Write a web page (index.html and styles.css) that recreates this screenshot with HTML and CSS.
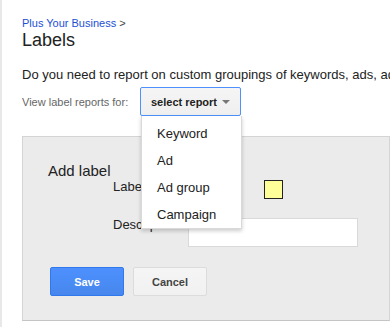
FILE: index.html
```html
<!DOCTYPE html>
<html lang="en">
<head>
    <meta charset="UTF-8">
    <title>Labels</title>
    <link rel="stylesheet" href="styles.css">
</head>
<body>
<div class="page">
    <div class="crumb"><a href="#">Plus Your Business</a> &gt;</div>
    <h1 class="title">Labels</h1>
    <p class="intro">Do you need to report on custom groupings of keywords, ads, ad groups or campaigns?</p>
    <div class="reportRow">
        <span class="reportLabel">View label reports for:</span>
        <div class="selectWrap">
            <div class="selectBtn">select report <span class="arrow"></span></div>
            <ul class="menu">
                <li>Keyword</li>
                <li>Ad</li>
                <li>Ad group</li>
                <li>Campaign</li>
            </ul>
        </div>
    </div>
    <div class="panel">
        <h2 class="panelTitle">Add label</h2>
        <div class="formRow rowLabel">
            <span class="fieldName">Label</span>
            <span class="swatch"></span>
        </div>
        <div class="formRow rowDesc">
            <span class="fieldName">Description</span>
            <span class="textInput"></span>
        </div>
        <div class="buttons">
            <span class="btn save">Save</span>
            <span class="btn cancel">Cancel</span>
        </div>
    </div>
</div>
</body>
</html>
```

FILE: styles.css
```css
*{
    margin:0;
    padding:0;
    list-style: none;
    box-sizing: border-box;
}
html,body{
    height: 100%;
    overflow: hidden;
}
body{
    font-family: "Liberation Sans", Arial, sans-serif;
    color: #222;
    background: #fff;
}
.page{
    height: 100%;
    border-left: 2px solid #e8e8e8;
    padding: 17px 0 0 20px;
}
.crumb{
    font-size: 11px;
    line-height: 13px;
    color: #444;
}
.crumb a{
    color: #1a4fd6;
    text-decoration: none;
}
.title{
    font-size: 18px;
    font-weight: normal;
    line-height: 20px;
    color: #222;
}
.intro{
    font-size: 13px;
    line-height: 16px;
    margin-top: 17px;
    white-space: nowrap;
    overflow: hidden;
}
.reportRow{
    display: flex;
    align-items: center;
    margin-top: 4px;
}
.reportLabel{
    font-size: 11px;
    color: #666;
    width: 118px;
}
.selectWrap{
    position: relative;
}
.selectBtn{
    width: 101px;
    height: 29px;
    border: 1px solid #4d90fe;
    border-radius: 2px;
    background: linear-gradient(#f5f5f5, #efefef);
    font-size: 11px;
    font-weight: bold;
    color: #222;
    display: flex;
    align-items: center;
    justify-content: center;
    gap: 5px;
}
.arrow{
    width: 0;
    height: 0;
    border-left: 4px solid transparent;
    border-right: 4px solid transparent;
    border-top: 4px solid #777;
}
.menu{
    position: absolute;
    left: 1px;
    top: 29px;
    width: 101px;
    padding: 4px 0 0;
    background: #fff;
    border: 1px solid rgba(0,0,0,.15);
    border-top: 0;
    box-shadow: 0 2px 4px rgba(0,0,0,.2);
    z-index: 10;
}
.menu li{
    height: 27px;
    line-height: 27px;
    padding-left: 15px;
    font-size: 13px;
    color: #222;
}
.panel{
    margin-top: 20px;
    height: 185px;
    background: #ebebeb;
    border: 1px solid #d4d4d4;
    border-bottom-color: #c4c4c4;
    padding: 25px 0 0 25px;
}
.panelTitle{
    font-size: 15px;
    font-weight: normal;
    line-height: 18px;
    color: #222;
}
.formRow{
    display: flex;
    align-items: flex-start;
    font-size: 13px;
}
.fieldName{
    width: 75px;
    margin-left: 65px;
    line-height: 15px;
    white-space: nowrap;
    overflow: hidden;
}
.rowLabel{
    height: 20px;
}
.rowLabel .fieldName{
    margin-top: -1px;
}
.swatch{
    width: 19px;
    height: 19px;
    margin-left: 76px;
    background: #ffff99;
    border: 1px solid #222;
}
.rowDesc{
    margin-top: 18px;
}
.rowDesc .fieldName{
    margin-top: -1px;
}
.textInput{
    width: 170px;
    height: 29px;
    background: #fff;
    border: 1px solid #d9d9d9;
}
.buttons{
    display: flex;
    gap: 9px;
    margin-top: 20px;
    margin-left: 2px;
}
.btn{
    width: 74px;
    height: 29px;
    border-radius: 2px;
    font-size: 11px;
    font-weight: bold;
    display: flex;
    align-items: center;
    justify-content: center;
}
.save{
    background: linear-gradient(#4d90fe, #4787ed);
    border: 1px solid #3079ed;
    color: #fff;
}
.cancel{
    background: linear-gradient(#f5f5f5, #f1f1f1);
    border: 1px solid #dcdcdc;
    color: #444;
}
```
